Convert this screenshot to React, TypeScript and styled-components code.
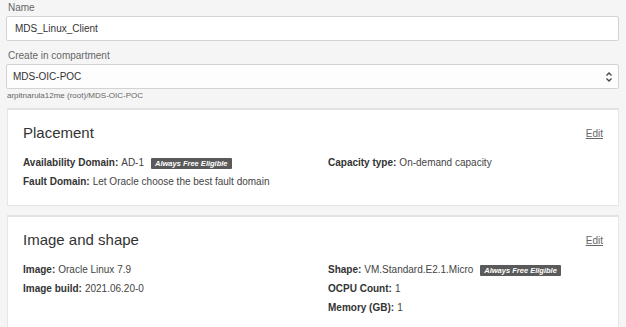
import styled, { createGlobalStyle } from 'styled-components'

const Global = createGlobalStyle`
  * { box-sizing: border-box; }
  body {
    margin: 0;
    background: #f5f5f5;
    font-family: "Liberation Sans", Arial, sans-serif;
    color: #333;
  }
`

const Page = styled.div`
  padding: 1px 7px 0 6px;
  display: flex;
  flex-direction: column;
`

const Label = styled.label`
  font-size: 10px;
  line-height: 14px;
  color: #666;
  padding-left: 2px;
  margin-bottom: 1px;
`

const Field = styled.div`
  height: 25px;
  background: #fff;
  border: 1px solid #d3d3d3;
  border-radius: 2px;
  display: flex;
  align-items: center;
  justify-content: space-between;
  padding: 0 8px 0 8px;
  font-size: 10px;
  color: #333;
  margin-bottom: 8px;
`

const SelectField = styled(Field)`
  background: #fdfdfd;
  margin-bottom: 1px;
  padding: 0 5px 0 6px;
`

const Helper = styled.div`
  font-size: 8px;
  line-height: 12px;
  color: #666;
  padding-left: 1px;
  margin-bottom: 6px;
`

const Card = styled.section`
  background: #fff;
  border: 1px solid #e6e6e6;
  border-top: 2px solid #e2e2e4;
  margin: 0 0 9px 1px;
  padding: 13px 15px 14px 15px;
`

const CardHead = styled.div`
  display: flex;
  justify-content: space-between;
  align-items: center;
  margin-bottom: 11px;
`

const Title = styled.h2`
  margin: 0;
  font-weight: 400;
  font-size: 15px;
  line-height: 20px;
  color: #333;
`

const Edit = styled.a`
  font-size: 10px;
  color: #666;
  text-decoration: underline;
`

const Grid = styled.div`
  display: grid;
  grid-template-columns: 305px 1fr;
`

const Col = styled.div`
  display: flex;
  flex-direction: column;
  gap: 1px;
`

const Row = styled.div`
  font-size: 10px;
  line-height: 18px;
  color: #444;
  display: flex;
  align-items: center;
  white-space: nowrap;

  b { margin-right: 3px; color: #333; }
`

const Badge = styled.span`
  background: #5a5a5a;
  color: #fff;
  font-size: 7.5px;
  font-weight: 700;
  font-style: italic;
  line-height: 11px;
  padding: 0 4px;
  border-radius: 1px;
  margin-left: 7px;
`

const Chevrons = () => (
  <svg width="8" height="12" viewBox="0 0 8 12" fill="none" stroke="#444" strokeWidth="1.3">
    <path d="M1.5 4.5 L4 2 L6.5 4.5" />
    <path d="M1.5 7.5 L4 10 L6.5 7.5" />
  </svg>
)

export default function App() {
  return (
    <>
      <Global />
      <Page>
        <Label>Name</Label>
        <Field>MDS_Linux_Client</Field>
        <Label>Create in compartment</Label>
        <SelectField>
          <span>MDS-OIC-POC</span>
          <Chevrons />
        </SelectField>
        <Helper>arpitnarula12me (root)/MDS-OIC-POC</Helper>

        <Card>
          <CardHead>
            <Title>Placement</Title>
            <Edit>Edit</Edit>
          </CardHead>
          <Grid>
            <Col>
              <Row>
                <b>Availability Domain:</b> AD-1 <Badge>Always Free Eligible</Badge>
              </Row>
              <Row>
                <b>Fault Domain:</b> Let Oracle choose the best fault domain
              </Row>
            </Col>
            <Col>
              <Row>
                <b>Capacity type:</b> On-demand capacity
              </Row>
            </Col>
          </Grid>
        </Card>

        <Card>
          <CardHead>
            <Title>Image and shape</Title>
            <Edit>Edit</Edit>
          </CardHead>
          <Grid>
            <Col>
              <Row>
                <b>Image:</b> Oracle Linux 7.9
              </Row>
              <Row>
                <b>Image build:</b> 2021.06.20-0
              </Row>
            </Col>
            <Col>
              <Row>
                <b>Shape:</b> VM.Standard.E2.1.Micro <Badge>Always Free Eligible</Badge>
              </Row>
              <Row>
                <b>OCPU Count:</b> 1
              </Row>
              <Row>
                <b>Memory (GB):</b> 1
              </Row>
            </Col>
          </Grid>
        </Card>
      </Page>
    </>
  )
}
